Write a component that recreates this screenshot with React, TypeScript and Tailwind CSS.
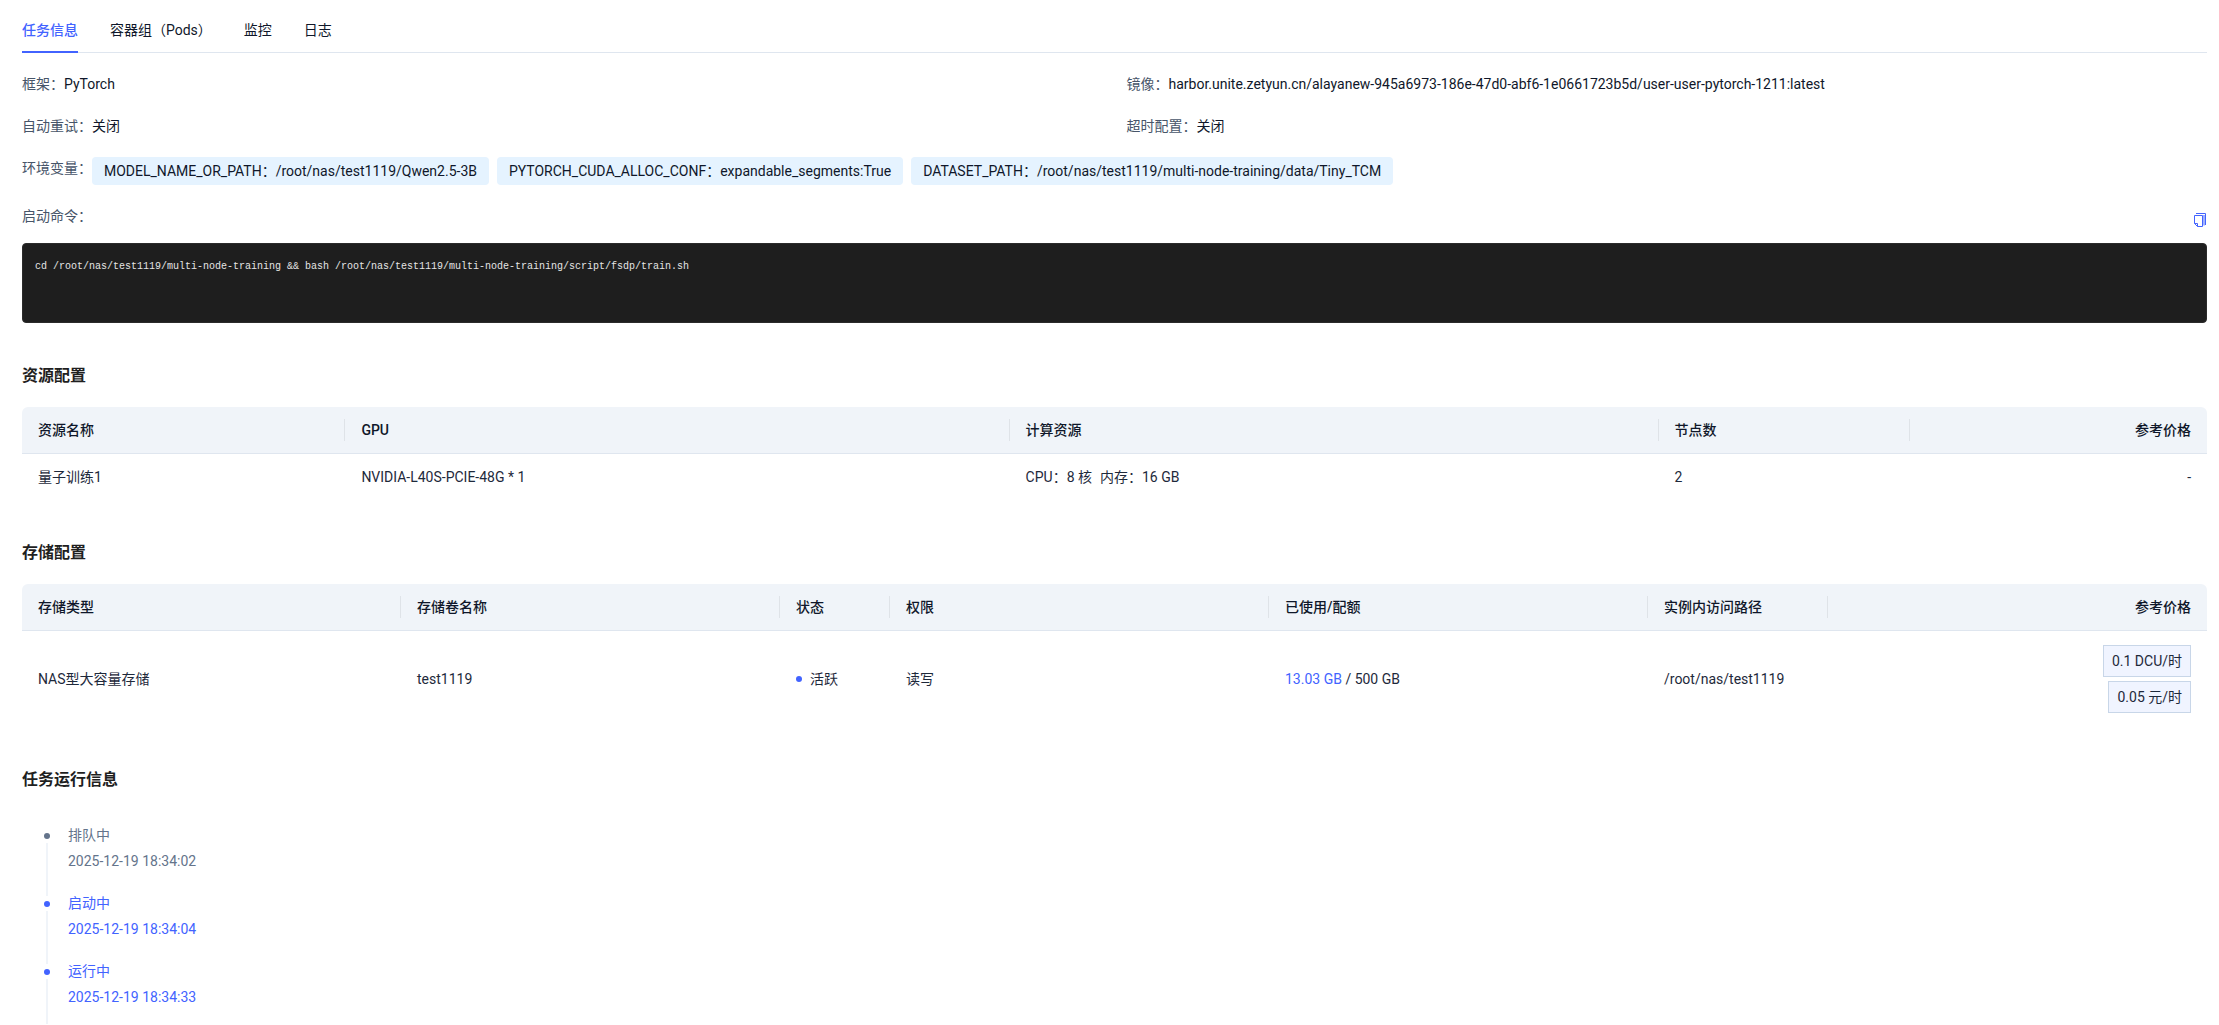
import { useState } from "react";
import type { ReactNode } from "react";

const tabs = ["任务信息", "容器组（Pods）", "监控", "日志"];

const envs = [
  { key: "MODEL_NAME_OR_PATH", value: "/root/nas/test1119/Qwen2.5-3B" },
  { key: "PYTORCH_CUDA_ALLOC_CONF", value: "expandable_segments:True" },
  { key: "DATASET_PATH", value: "/root/nas/test1119/multi-node-training/data/Tiny_TCM" },
];

const command =
  "cd /root/nas/test1119/multi-node-training && bash /root/nas/test1119/multi-node-training/script/fsdp/train.sh";

const steps = [
  { title: "排队中", time: "2025-12-19 18:34:02", active: false },
  { title: "启动中", time: "2025-12-19 18:34:04", active: true },
  { title: "运行中", time: "2025-12-19 18:34:33", active: true },
];

type Column = { title: string; width?: string };

function CopyIcon() {
  return (
    <svg viewBox="0 0 14 14" className="size-3.5" fill="none" stroke="currentColor">
      <path d="M1.5 2.5h8v11h-5l-3-3z" />
      <path d="M1.5 10.5h3v3" />
      <path d="M3 .5h9.5V12" />
      <path d="M11 2v10.5" strokeWidth="2" opacity="0.5" />
    </svg>
  );
}

function Field({ label, children }: { label: string; children?: ReactNode }) {
  return (
    <div className="flex items-start">
      <dt className="shrink-0 text-[#475569]">{label}：</dt>
      <dd className="text-[#0f172a]">{children}</dd>
    </div>
  );
}

function Section({ title, children }: { title: string; children: ReactNode }) {
  return (
    <section className="mt-10">
      <h2 className="mb-[18px] text-base leading-[26px] font-bold text-[#1f1f1f]">{title}</h2>
      {children}
    </section>
  );
}

function DataTable({ columns, children }: { columns: Column[]; children: ReactNode }) {
  return (
    <table className="w-full table-fixed border-separate border-spacing-0 text-left">
      <thead>
        <tr>
          {columns.map((col, i) => {
            const last = i === columns.length - 1;
            return (
              <th
                key={col.title}
                className={`border-b border-[#dfe6ef] bg-[#f0f4f9] py-3 font-medium text-[#0f172a] first:rounded-tl-md last:rounded-tr-md ${col.width ?? ""}`}
              >
                <div className={`px-4 ${last ? "text-right" : "border-r border-[#dfe3e8]"}`}>
                  {col.title}
                </div>
              </th>
            );
          })}
        </tr>
      </thead>
      <tbody className="text-[#1e293b]">{children}</tbody>
    </table>
  );
}

export default function App() {
  const [tab, setTab] = useState(0);

  return (
    <main
      lang="zh-CN"
      className="bg-white pr-3 pl-[22px] font-['Roboto','Noto_Sans_CJK_SC',sans-serif] text-sm leading-[22px] text-[#0f172a]"
    >
      <nav className="flex h-[53px] gap-8 border-b border-[#dfe6ef]">
        {tabs.map((name, i) => (
          <button
            key={name}
            type="button"
            onClick={() => setTab(i)}
            className={`-mb-px border-b-2 pt-2 ${
              tab === i ? "border-[#4263ff] font-medium text-[#4263ff]" : "border-transparent"
            }`}
          >
            {name}
          </button>
        ))}
      </nav>

      <dl className="mt-5 grid grid-cols-2 gap-x-6 gap-y-5">
        <Field label="框架">PyTorch</Field>
        <Field label="镜像">
          harbor.unite.zetyun.cn/alayanew-945a6973-186e-47d0-abf6-1e0661723b5d/user-user-pytorch-1211:latest
        </Field>
        <Field label="自动重试">关闭</Field>
        <Field label="超时配置">关闭</Field>
        <div className="col-span-2">
          <Field label="环境变量">
            <ul className="flex flex-wrap gap-2">
              {envs.map((env) => (
                <li key={env.key} className="rounded-sm bg-[#e5f3ff] px-3 leading-7">
                  {env.key}：{env.value}
                </li>
              ))}
            </ul>
          </Field>
        </div>
      </dl>

      <div className="mt-5 flex items-end justify-between">
        <span className="mb-4 text-[#475569]">启动命令：</span>
        <button type="button" aria-label="复制" className="mb-4 text-[#4263ff]">
          <CopyIcon />
        </button>
      </div>
      <pre className="h-20 overflow-auto rounded border border-[#2b2b2b] bg-[#1e1e1e] px-3 py-3 font-['Liberation_Mono',monospace] text-[10px] leading-[22px] text-[#e5e5e5]">
        {command}
      </pre>

      <Section title="资源配置">
        <DataTable
          columns={[
            { title: "资源名称", width: "w-[14.8%]" },
            { title: "GPU", width: "w-[30.4%]" },
            { title: "计算资源", width: "w-[29.7%]" },
            { title: "节点数", width: "w-[11.5%]" },
            { title: "参考价格" },
          ]}
        >
          <tr>
            <td className="px-4 py-3">量子训练1</td>
            <td className="px-4 py-3">NVIDIA-L40S-PCIE-48G * 1</td>
            <td className="px-4 py-3">
              <span className="mr-2">CPU：8 核</span>
              <span>内存：16 GB</span>
            </td>
            <td className="px-4 py-3">2</td>
            <td className="px-4 py-3 text-right">-</td>
          </tr>
        </DataTable>
      </Section>

      <Section title="存储配置">
        <DataTable
          columns={[
            { title: "存储类型" },
            { title: "存储卷名称" },
            { title: "状态", width: "w-[110px]" },
            { title: "权限" },
            { title: "已使用/配额" },
            { title: "实例内访问路径", width: "w-[180px]" },
            { title: "参考价格" },
          ]}
        >
          <tr>
            <td className="px-4 py-3.5">NAS型大容量存储</td>
            <td className="px-4 py-3.5">test1119</td>
            <td className="px-4 py-3.5">
              <span className="flex items-center gap-2">
                <i className="size-1.5 rounded-full bg-[#4263ff]" />
                活跃
              </span>
            </td>
            <td className="px-4 py-3.5">读写</td>
            <td className="px-4 py-3.5">
              <span className="text-[#4263ff]">13.03 GB</span> / 500 GB
            </td>
            <td className="px-4 py-3.5">/root/nas/test1119</td>
            <td className="px-4 py-3.5">
              <div className="flex flex-col items-end gap-1">
                <span className="border border-[#c8d6e8] bg-[#f0f4ff] px-2 py-1">0.1 DCU/时</span>
                <span className="border border-[#c8d6e8] bg-[#f0f4ff] px-2 py-1">0.05 元/时</span>
              </div>
            </td>
          </tr>
        </DataTable>
      </Section>

      <Section title="任务运行信息">
        <ol className="pt-[13px] pl-[22px]">
          {steps.map((step) => (
            <li key={step.title} className="group flex gap-[18px]">
              <div className="-mb-1 flex w-1.5 flex-col items-center gap-1 pt-[9px] group-last:mb-0">
                <i
                  className={`size-1.5 shrink-0 rounded-full ${step.active ? "bg-[#4263ff]" : "bg-[#64748b]"}`}
                />
                <i className="w-0.5 flex-1 bg-[#f0f4f9]" />
              </div>
              <div
                className={`pb-5 group-last:pb-4 ${step.active ? "text-[#4263ff]" : "text-[#64748b]"}`}
              >
                <p>{step.title}</p>
                <time className="mt-1 block">{step.time}</time>
              </div>
            </li>
          ))}
        </ol>
      </Section>
    </main>
  );
}
